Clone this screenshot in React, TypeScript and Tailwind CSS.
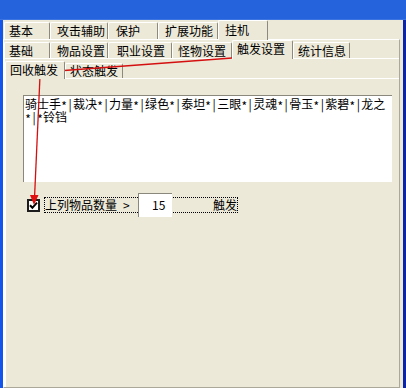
import React from "react";

function Mixed({ text }: { text: string }) {
  return (
    <>
      {[...text].map((c, i) =>
        c === "*" ? (
          <span key={i} className="relative top-[2px] inline-block w-[6px] text-center">
            {c}
          </span>
        ) : c.charCodeAt(0) < 128 ? (
          <span key={i} className="inline-block w-[6px] text-center">
            {c}
          </span>
        ) : (
          <React.Fragment key={i}>{c}</React.Fragment>
        )
      )}
    </>
  );
}

export default function App() {
  const tabBase =
    "shrink-0 bg-[#ece9d8] border-t border-l border-r border-t-white border-l-white border-r-[#8d8a7d] rounded-tl-[2px] rounded-tr-[2px] whitespace-nowrap";
  return (
    <div className="relative w-[406px] h-[388px] overflow-hidden font-['Noto_Sans_CJK_SC',sans-serif] text-[12px] text-black">
      <div className="flex flex-col w-full h-full">
        {/* title bar remnant */}
        <div className="h-[20px] shrink-0 bg-[#2563dd] border-b border-b-[#3c74e2]" />
        <div className="flex flex-1">
          <div className="w-[3px] bg-[#1556ea]" />
          <div className="w-[400px] bg-[#ece9d8] flex flex-col">
            {/* Row 1 tabs */}
            <div className="h-[19px] shrink-0 flex items-end pl-[1px]">
              <div className={`${tabBase} w-[46px] h-[17px] pl-[4px] leading-[16px]`}>基本</div>
              <div className={`${tabBase} w-[58px] h-[17px] pl-[6px] leading-[16px]`}>攻击辅助</div>
              <div className={`${tabBase} w-[50px] h-[17px] pl-[7px] leading-[16px]`}>保护</div>
              <div className={`${tabBase} w-[60px] h-[17px] pl-[6px] leading-[16px]`}>扩展功能</div>
              <div className={`${tabBase} relative z-10 w-[50px] h-[20px] -mb-px pl-[6px] pt-[1px] leading-[16px]`}>挂机</div>
            </div>
            {/* Panel 1 */}
            <div className="flex-1 flex flex-col mr-[3px] border-t border-l border-r border-b border-t-white border-l-white border-r-[#aca899] border-b-[#aca899]">
              {/* Row 2 tabs */}
              <div className="h-[18px] shrink-0 flex items-end">
                <div className={`${tabBase} w-[46px] h-[16px] pl-[4px] leading-[15px]`}>基础</div>
                <div className={`${tabBase} w-[58px] h-[16px] pl-[6px] leading-[15px]`}>物品设置</div>
                <div className={`${tabBase} w-[64px] h-[16px] pl-[8px] leading-[15px]`}>职业设置</div>
                <div className={`${tabBase} w-[60px] h-[16px] pl-[5px] leading-[15px]`}>怪物设置</div>
                <div className={`${tabBase} relative z-10 w-[61px] h-[19px] -mb-px pl-[4px] leading-[15px]`}>触发设置</div>
                <div className={`${tabBase} w-[57px] h-[16px] pl-[4px] leading-[15px]`}>统计信息</div>
              </div>
              {/* Panel 2 */}
              <div className="flex-1 flex flex-col border-t border-l border-t-white border-l-white">
                {/* Row 3 tabs */}
                <div className="h-[19px] shrink-0 flex items-end">
                  <div className={`${tabBase} relative z-10 w-[60px] h-[18px] -mb-px pl-[4px] leading-[15px]`}>回收触发</div>
                  <div className={`${tabBase} w-[58px] h-[15px] pl-[4px] leading-[14px]`}>状态触发</div>
                </div>
                {/* Panel 3 */}
                <div className="flex-1 flex flex-col border-t border-l border-t-white border-l-white">
                  <div className="mt-[16px] ml-[17px] w-[369px] h-[87px] bg-white border-t border-l border-t-[#8a887c] border-l-[#8a887c] pl-[1px] pt-[1px] leading-[13px]">
                    <div className="whitespace-nowrap h-[13px]">
                      <Mixed text="骑士手*|裁决*|力量*|绿色*|泰坦*|三眼*|灵魂*|骨玉*|紫碧*|龙之" />
                    </div>
                    <div className="whitespace-nowrap h-[13px]">
                      <Mixed text="*|*铃铛" />
                    </div>
                  </div>
                  {/* checkbox row */}
                  <div className="mt-[11px] ml-[21px] h-[24px] flex items-center">
                    <div className="w-[13px] h-[13px] shrink-0 bg-white border-2 border-[#1c1c1c] flex items-center justify-center">
                      <svg width="9" height="9" viewBox="0 0 9 9">
                        <path d="M1 4.2 L3.4 6.8 L8 1.6" fill="none" stroke="#000" strokeWidth="2" />
                      </svg>
                    </div>
                    <div className="ml-[4px] w-[194px] h-[16px] border border-dotted border-black flex items-center leading-[14px] whitespace-nowrap">
                      <span>上列物品数量</span>
                      <span className="ml-[6px] inline-block w-[6px]">&gt;</span>
                      <div className="ml-[9px] shrink-0 w-[34px] h-[24px] bg-white border-t border-l border-t-[#8a887c] border-l-[#8a887c] pl-[13px] leading-[22px]">
                        15
                      </div>
                      <span className="ml-auto">触发</span>
                    </div>
                  </div>
                </div>
              </div>
            </div>
          </div>
          <div className="w-[3px] bg-[#0c25a6]" />
        </div>
      </div>

      {/* red annotation arrows */}
      <svg
        className="absolute inset-0 pointer-events-none"
        width="406"
        height="388"
        viewBox="0 0 406 388"
      >
        <g stroke="#d40f0f" strokeWidth="1.3" fill="none">
          <line x1="233" y1="26" x2="257" y2="53" />
          <line x1="259" y1="56" x2="44" y2="72" />
          <line x1="40" y1="76" x2="34.5" y2="198" />
        </g>
        <g fill="#e01010">
          <polygon points="262,58 252.4,54.8 258.8,48.4" />
          <polygon points="35,73 45.3,77.5 44.7,67.8" />
          <polygon points="34,205 30,195 38.5,195" />
        </g>
      </svg>
    </div>
  );
}
